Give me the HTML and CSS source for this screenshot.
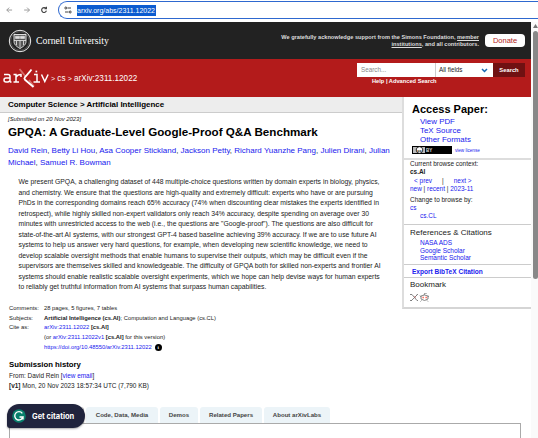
FILE: index.html
```html
<!DOCTYPE html>
<html lang="en">
<head>
<meta charset="utf-8">
<title>GPQA: A Graduate-Level Google-Proof Q&amp;A Benchmark</title>
<link rel="stylesheet" href="styles.css">
</head>
<body>
<div class="toolbar">
  <svg class="nav" width="60" height="22" viewBox="0 0 60 22" fill="none" stroke-width="1">
    <path d="M12.500 10H7M9.500 7.500L7 10l2.500 2.500M25 10h5.500M28 7.500l2.500 2.500-2.500 2.500" stroke="#999"/>
    <path d="M47.600 8.500A2.500 2.500 0 1 0 48 10.700M48 6.700v2h-2" stroke="#444" stroke-width="1.200"/>
  </svg>
  <div class="address">
    <svg width="8" height="8" viewBox="0 0 8 8" fill="none" stroke="#444"><path d="M3.500 2H7M1 6h3.500"/><circle cx="1.800" cy="2" r="1"/><circle cx="6.200" cy="6" r="1"/></svg>
    <span class="url">arxiv.org/abs/2311.12022</span>
  </div>
</div>
<div class="viewport">
<div class="page">
  <header class="cornell">
    <svg class="seal" width="24" height="24" viewBox="0 0 24 24" fill="none" stroke="#eee">
      <circle cx="12" cy="12" r="10.700" stroke-width="1"/><circle cx="12" cy="12" r="9.300" stroke="#777" stroke-width=".6"/>
      <path d="M6 5.500h12v7c0 3-2.500 5-6 7-3.500-2-6-4-6-7z" fill="#555" stroke-width=".9"/>
      <path d="M6 11.500h12M12 11.500v7M8.500 12v4M15.500 12v4" stroke-width=".8"/><path d="M7.500 9.500h4V7.200h-4zM12.500 9.500h4V7.200h-4z" fill="#ddd" stroke-width=".5"/>
    </svg>
    <span class="univ">Cornell University</span>
    <div class="support">We gratefully acknowledge support from the Simons Foundation, <u>member</u><br><u>institutions</u>, and all contributors.</div>
    <span class="donate">Donate</span>
  </header>
  <div class="banner">
    <svg class="logo" width="46" height="22" viewBox="0 0 46 22" fill="none" stroke="#fff" stroke-width="1.500">
      <path d="M1 6.500h4q2 0 2 2v5.700M7 10H3Q1 10 1 12t2 2h2l2-1M7 14h1.500M10.500 6.500H13V14M10.500 14h5.500M13 9q1.500-2.500 5-2.500V9"/>
      <path d="M16.500 1l6.500 8M26 12l5 6.500" stroke="#d56c68" stroke-width="1.800"/><path d="M28.500 1.500Q27.500 3 22 9.200q-1.200 1.300 0 2.600L30.500 19" stroke-width="1.800"/>
      <path d="M31 6.500h3V14M30.500 14h6.500M38.500 6.500l3.300 7 3.300-7"/><path d="M32.500 3.500h1.700" stroke-width="1.700"/>
    </svg>
    <span class="crumbs"><i>&gt;</i> cs <i>&gt;</i> arXiv:2311.12022</span>
    <div class="search">
      <div class="fields"><span class="query">Search...</span><span class="select">All fields<svg width="7" height="5" viewBox="0 0 7 5" fill="none" stroke="#1468b3" stroke-width="1.500"><path d="M1 1l2.500 2.500L6 1"/></svg></span><span class="go">Search</span></div>
      <div class="help">Help | Advanced Search</div>
    </div>
  </div>
  <div class="content">
    <main>
      <div class="subject">Computer Science &gt; Artificial Intelligence</div>
      <div class="date">[Submitted on 20 Nov 2023]</div>
      <h1>GPQA: A Graduate-Level Google-Proof Q&amp;A Benchmark</h1>
      <div class="authors"><a>David Rein</a>, <a>Betty Li Hou</a>, <a>Asa Cooper Stickland</a>, <a>Jackson Petty</a>, <a>Richard Yuanzhe Pang</a>, <a>Julien Dirani</a>, <a>Julian<br>Michael</a>, <a>Samuel R. Bowman</a></div>
      <p class="abstract">We present GPQA, a challenging dataset of 448 multiple-choice questions written by domain experts in biology, physics,<br>and chemistry. We ensure that the questions are high-quality and extremely difficult: experts who have or are pursuing<br>PhDs in the corresponding domains reach 65% accuracy (74% when discounting clear mistakes the experts identified in<br>retrospect), while highly skilled non-expert validators only reach 34% accuracy, despite spending on average over 30<br>minutes with unrestricted access to the web (i.e., the questions are "Google-proof"). The questions are also difficult for<br>state-of-the-art AI systems, with our strongest GPT-4 based baseline achieving 39% accuracy. If we are to use future AI<br>systems to help us answer very hard questions, for example, when developing new scientific knowledge, we need to<br>develop scalable oversight methods that enable humans to supervise their outputs, which may be difficult even if the<br>supervisors are themselves skilled and knowledgeable. The difficulty of GPQA both for skilled non-experts and frontier AI<br>systems should enable realistic scalable oversight experiments, which we hope can help devise ways for human experts<br>to reliably get truthful information from AI systems that surpass human capabilities.</p>
      <div class="meta">
        <span>Comments:</span><span>28 pages, 5 figures, 7 tables</span>
        <span>Subjects:</span><span><b>Artificial Intelligence (cs.AI)</b>; Computation and Language (cs.CL)</span>
        <span>Cite as:</span><span><a>arXiv:2311.12022</a> <b>[cs.AI]</b></span>
        <span></span><span>(or <a>arXiv:2311.12022v1</a> <b>[cs.AI]</b> for this version)</span>
        <span></span><span class="doi"><a>https://doi.org/10.48550/arXiv.2311.12022</a><em class="info">i</em></span>
      </div>
      <h2>Submission history</h2>
      <div class="history">From: David Rein [<a>view email</a>]<br><b>[v1]</b> Mon, 20 Nov 2023 18:57:34 UTC (7,790 KB)</div>
    </main>
    <aside>
      <section class="access">
        <h3>Access Paper:</h3>
        <a>View PDF</a><a>TeX Source</a><a>Other Formats</a>
        <div class="license"><svg width="40" height="8" viewBox="0 0 40 8"><path d="M0 0h40v8H0z"/><path d="M1 1h12v6H1z" fill="#bbb"/><circle cx="7.500" cy="4" r="3.300" fill="#fff" stroke="#000" stroke-width=".8"/><text x="5.200" y="5.500" font-size="4" font-weight="bold">cc</text><text x="14" y="5.800" font-size="4.500" font-weight="bold" fill="#ddd">BY</text></svg><a>view license</a></div>
      </section>
      <section class="browse">
        <div>Current browse context:</div><b>cs.AI</b>
        <div class="steps"><a>&lt; prev</a><span>|</span><a>next &gt;</a></div>
        <div class="recent"><a>new</a> | <a>recent</a> | <a>2023-11</a></div>
        <div class="change">Change to browse by:</div>
        <a>cs</a><a class="child">cs.CL</a>
      </section>
      <section class="refs"><h4>References &amp; Citations</h4><a>NASA ADS</a><a>Google Scholar</a><a>Semantic Scholar</a></section>
      <section class="export"><a>Export BibTeX Citation</a></section>
      <section class="bookmark"><h4>Bookmark</h4>
        <svg width="19" height="9" viewBox="0 0 19 9" fill="none" stroke="#777" stroke-width=".9"><path d="M0 1.500h2l5 6h1M8 1L1 8M0 7.500h2M6 2l1 .5"/><path d="M4 4h2" stroke="#b66"/><path d="M11 3q3.500-2 7 0v3q-3.500 3-7 0zM11.500 7.500l-1 1M17 7.500l1 1M14 2l1-2h2M10 2.500l1 1.500M19 2.500L18 4"/><path d="M12.500 4.500h1.300M15.500 4.500h1.300" stroke="#f54" stroke-width="1.300"/></svg>
      </section>
    </aside>
  </div>
  <div class="tabs"><span class="t1"></span><span class="t2">Code, Data, Media</span><span class="t3">Demos</span><span class="t4">Related Papers</span><span class="t5">About arXivLabs</span></div>
  <div class="panel"></div>
  <div class="citation"><svg width="14" height="14" viewBox="0 0 14 14"><circle cx="7" cy="7" r="6.800" fill="#087f6c"/><path d="M10.300 4.300A4.200 4.200 0 1 0 11 8H7.500M11 8v2.500" fill="none" stroke="#fff" stroke-width="1.400"/></svg><span>Get citation</span></div>
</div>
<div class="scroll"><svg width="7" height="8" viewBox="0 0 7 8"><path d="M1 6l2.500-4L6 6z" fill="#777"/></svg><div class="thumb"></div></div>
</div>
</body>
</html>
```
FILE: styles.css
```css
* { box-sizing: border-box; }
body { margin: 0; width: 538px; height: 438px; overflow: hidden; background: #fff; font-family: "Liberation Sans", Arial, sans-serif; color: #222; white-space: nowrap; font-size: 7px; }
a { color: #2020ee; }
h1, h2, h3, h4, p { margin: 0; }
.toolbar { display: flex; height: 22px; }
.nav { flex: none; width: 58px; }
.address { flex: 1; height: 18px; margin-top: 1px; border: 1px solid #2e68cf; border-right: 0; border-radius: 9px 0 0 9px; display: flex; align-items: center; padding-left: 5px; }
.url { margin-left: 5px; background: #0b5bd0; color: #fff; width: 79px; height: 11px; line-height: 11px; font-size: 7px; }
.viewport { display: flex; height: 416px; }
.page { width: 531px; position: relative; }
.cornell { height: 37px; background: #222; display: flex; align-items: center; color: #fff; padding: 0 6px 0 8px; }
.univ { font-family: "Liberation Serif", serif; font-size: 9.75px; margin-left: 4px; }
.support { margin-left: auto; text-align: right; font-weight: bold; font-size: 5.63px; line-height: 7px; color: #ddd; }
.donate { margin-left: 6px; width: 40px; height: 13px; border-radius: 4px; background: #fff; color: #b31b1b; font-size: 7.5px; line-height: 13px; text-align: center; }
.banner { height: 38px; background: #b31b1b; color: #fff; display: flex; padding: 0 6px 0 3px; }
.logo { margin-top: 9px; }
.crumbs { font-size: 8.15px; line-height: 10px; margin: 15px 0 0 2px; }
.crumbs i { font-style: normal; font-size: 7px; }
.search { margin: 4px 0 0 auto; width: 168px; }
.fields { display: flex; height: 14px; line-height: 14px; font-size: 6.3px; }
.query { width: 79px; background: #fff; color: #888; padding-left: 4px; border-right: 1px solid #ccc; }
.select { width: 57px; background: #fff; color: #222; padding: 0 5px 0 3px; display: flex; justify-content: space-between; align-items: center; }
.go { flex: 1; background: #701112; text-align: center; font-weight: bold; font-size: 5.8px; }
.help { font-size: 5.7px; font-weight: bold; line-height: 9px; padding-left: 15px; }
.content { display: flex; height: 307px; }
main { width: 402px; }
.subject { height: 16px; background: #ededed; border-bottom: 1px solid #ccc; font-size: 7.95px; font-weight: bold; line-height: 15px; padding-left: 8px; color: #000; }
.date { font-size: 5.9px; font-style: italic; line-height: 10px; padding: 1px 0 0 8px; }
h1 { font-size: 11.65px; line-height: 16px; padding-left: 8px; color: #000; }
.authors { font-size: 8px; line-height: 12px; padding: 5px 0 0 8px; }
.abstract { font-size: 6.8px; line-height: 10.55px; padding: 8px 0 0 18.5px; }
.meta { display: grid; grid-template-columns: 35px auto; grid-auto-rows: 9.7px; line-height: 9.7px; font-size: 5.83px; padding: 11px 0 0 9px; }
.doi { display: flex; align-items: center; }
.info { background: #000; color: #fff; border-radius: 50%; width: 7px; height: 7px; text-align: center; font: bold 5px/7px "Liberation Serif", serif; margin-left: 3px; }
h2 { font-size: 7.75px; line-height: 12px; margin-top: 7px; padding-left: 9px; color: #000; }
.history { font-size: 6.43px; line-height: 9.6px; padding: 0 0 0 9px; }
aside { width: 129px; height: 212px; border-left: 2px solid #ddd; border-bottom: 2px solid #d5d5d5; }
section { border-bottom: 1px solid #ccc; padding-left: 6px; }
section:last-child { border: 0; }
section a, section b { display: block; }
.access { height: 63px; padding: 5px 0 0 8px; border-bottom: 2px solid #ddd; }
.access h3 { font-size: 11px; line-height: 15px; color: #000; }
.access > a { font-size: 7.9px; line-height: 9px; padding-left: 8px; }
.license { display: flex; align-items: center; gap: 3px; height: 8px; margin-top: 2px; font-size: 4.6px; }
.browse { height: 65px; font-size: 6.45px; line-height: 8.4px; }
.steps { display: flex; gap: 10px; padding-left: 4px; }
.recent a { display: inline; }
.change { margin-top: 2px; }
.child { padding-left: 10px; }
h4 { font-size: 8px; line-height: 13px; font-weight: normal; }
.refs { height: 40px; font-size: 6.5px; line-height: 7.7px; padding-top: 1px; }
.refs a { padding-left: 10px; }
.export { height: 13px; font-size: 6.55px; line-height: 13px; font-weight: bold; padding-left: 8px; }
.bookmark h4 { line-height: 14px; margin-bottom: 1px; }
.tabs { height: 19px; padding: 3px 0 0 73px; display: flex; gap: 2px; font-size: 6.1px; font-weight: bold; color: #444; line-height: 16px; text-align: center; }
.tabs span { background: #ecf4f8; border-radius: 3px 3px 0 0; height: 16px; }
.tabs .t1 { width: 11px; background: #fff; border-right: 1px solid #bbb; }
.t2 { width: 72px; } .t3 { width: 38px; } .t4 { width: 62px; } .t5 { width: 66px; }
.panel { margin-left: 9px; width: 512px; height: 20px; border: 1px solid #aaa; border-bottom: 0; }
.citation { position: absolute; left: 7px; top: 382px; width: 78px; height: 24px; border-radius: 12px 12px 12px 3px; background: #20243d; color: #fff; display: flex; align-items: center; padding-left: 5px; font: bold 7.5px Inter, sans-serif; gap: 6px; box-shadow: 0 1px 2px #0005; }
.scroll { width: 7px; background: #fafafa; padding-left: 1px; }
.thumb { width: 5px; height: 248px; margin-left: 1px; background: #888; border-radius: 3px; }
```
